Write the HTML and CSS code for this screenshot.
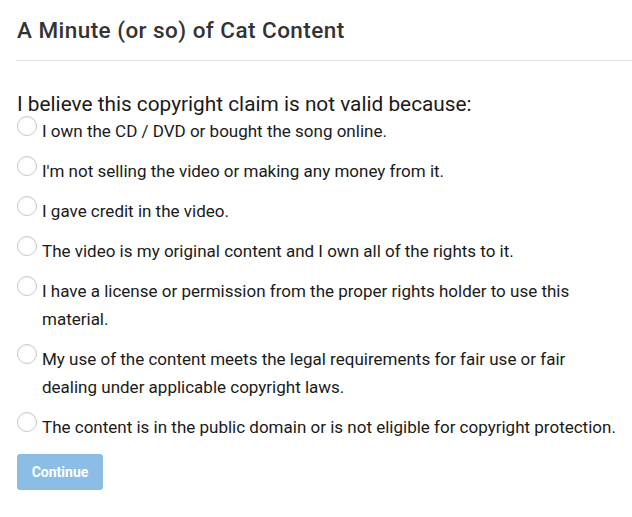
FILE: index.html
```html
<!DOCTYPE html>
<html>
<head>
<meta charset="utf-8">
<link rel="stylesheet" href="styles.css">
</head>
<body>
<div class="page">
  <div class="header"><h1 class="title">A Minute (or so) of Cat Content</h1></div>
  <div class="form">
    <div class="question">I believe this copyright claim is not valid because:</div>
    <div class="options">
      <label class="option"><span class="radio"></span><span class="label">I own the CD / DVD or bought the song online.</span></label>
      <label class="option"><span class="radio"></span><span class="label">I'm not selling the video or making any money from it.</span></label>
      <label class="option"><span class="radio"></span><span class="label">I gave credit in the video.</span></label>
      <label class="option"><span class="radio"></span><span class="label">The video is my original content and I own all of the rights to it.</span></label>
      <label class="option"><span class="radio"></span><span class="label">I have a license or permission from the proper rights holder to use this material.</span></label>
      <label class="option"><span class="radio"></span><span class="label">My use of the content meets the legal requirements for fair use or fair dealing under applicable copyright laws.</span></label>
      <label class="option"><span class="radio"></span><span class="label">The content is in the public domain or is not eligible for copyright protection.</span></label>
    </div>
    <button class="btn" disabled>Continue</button>
  </div>
</div>
</body>
</html>
```
FILE: styles.css
```css
* { box-sizing: border-box; }
html, body { margin: 0; padding: 0; background: #fff; }
body { font-family: Roboto, "Noto Sans", sans-serif; color: #1a1a1a; }
.page { padding-left: 16px; }
.header { border-bottom: 1px solid #e3e3e3; padding: 16px 0 15px 1px; }
.title { margin: 0; font-size: 22.5px; letter-spacing: 0.45px; font-weight: 500; color: #333; line-height: 29px; }
.form { padding: 31px 0 0 1px; }
.question { font-size: 20.8px; line-height: 25px; color: #1a1a1a; }
.options { display: flex; flex-direction: column; gap: 12px; margin-bottom: 13px; }
.option { display: flex; align-items: flex-start; gap: 5px; font-size: 17px; line-height: 28px; color: #1a1a1a; padding-right: 16px; }
.radio { flex: none; width: 20px; height: 20px; border: 1px solid #c8c8c8; border-radius: 50%; background: #fff; margin-top: -1px; box-shadow: inset 0 1px 2px rgba(0,0,0,0.06); }
.label { display: block; }
.btn { font-family: Roboto, sans-serif; font-weight: 700; font-size: 14px; color: #fff; background: #8bbde5; border: none; border-radius: 3px; width: 86px; height: 36px; padding: 0; }
```
